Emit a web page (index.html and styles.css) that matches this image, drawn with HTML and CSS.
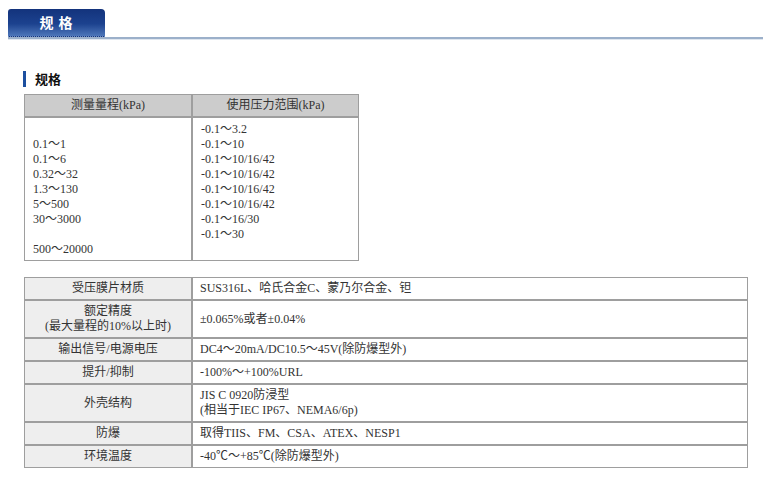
FILE: index.html
```html
<!DOCTYPE html>
<html lang="zh-CN">
<head>
<meta charset="utf-8">
<title>规格</title>
<link rel="stylesheet" href="styles.css">
</head>
<body>
<div class="page">
  <div class="tabbar">
    <div class="tab">规 格</div>
  </div>
  <div class="content">
    <h3 class="sec">规格</h3>
    <table class="spec t1">
      <thead>
        <tr><th class="c1">测量量程(kPa)</th><th>使用压力范围(kPa)</th></tr>
      </thead>
      <tbody>
        <tr>
          <td class="c1"><br>0.1～1<br>0.1～6<br>0.32～32<br>1.3～130<br>5～500<br>30～3000<br><br>500～20000</td>
          <td>-0.1～3.2<br>-0.1～10<br>-0.1～10/16/42<br>-0.1～10/16/42<br>-0.1～10/16/42<br>-0.1～10/16/42<br>-0.1～16/30<br>-0.1～30</td>
        </tr>
      </tbody>
    </table>
    <table class="spec t2">
      <tbody>
        <tr><th class="c1">受压膜片材质</th><td>SUS316L、哈氏合金C、蒙乃尔合金、钽</td></tr>
        <tr class="two"><th class="c1">额定精度<br>(最大量程的10%以上时)</th><td>±0.065%或者±0.04%</td></tr>
        <tr><th class="c1">输出信号/电源电压</th><td>DC4～20mA/DC10.5～45V(除防爆型外)</td></tr>
        <tr><th class="c1">提升/抑制</th><td>-100%～+100%URL</td></tr>
        <tr class="two"><th class="c1">外壳结构</th><td>JIS C 0920防浸型<br>(相当于IEC IP67、NEMA6/6p)</td></tr>
        <tr><th class="c1">防爆</th><td>取得TIIS、FM、CSA、ATEX、NESP1</td></tr>
        <tr><th class="c1">环境温度</th><td>-40℃～+85℃(除防爆型外)</td></tr>
      </tbody>
    </table>
  </div>
</div>
</body>
</html>
```
FILE: styles.css
```css
html, body {
  margin: 0;
  padding: 0;
  background: #fff;
}
body {
  padding: 8px;
  font-family: "Liberation Serif", "Noto Sans CJK SC", serif;
  font-size: 12px;
  color: #333;
}
.page {
  width: 765px;
}
.tabbar {
  width: 755px;
  padding-top: 1px;
  border-bottom: 2px solid #9cb0ca;
  box-shadow: 0 1px 0 #dfe6ef;
  display: flex;
}
.tab {
  width: 97px;
  height: 28px;
  box-sizing: border-box;
  border-radius: 3px 4px 0 0;
  background: linear-gradient(to bottom, #13337c 0%, #1c428f 55%, #4d76b9 100%);
  border-bottom: 1px dotted #6f8fc4;
  color: #fff;
  font-family: "Noto Sans CJK SC", sans-serif;
  font-weight: bold;
  font-size: 14px;
  line-height: 27px;
  text-align: center;
  letter-spacing: 1px;
}
.content {
  padding-left: 16px;
  padding-top: 32px;
}
.sec {
  margin: 0;
  height: 16px;
  border-left: 3px solid #1d4f9f;
  padding-left: 9px;
  font-family: "Noto Sans CJK SC", sans-serif;
  font-size: 13px;
  font-weight: bold;
  color: #111;
  line-height: 16px;
  margin-left: -1px;
}
.spec {
  border-collapse: separate;
  border-spacing: 0;
  table-layout: fixed;
}
.spec th, .spec td {
  border: 1px solid #9e9e9e;
  padding: 3px 7px;
  line-height: 15px;
  font-weight: normal;
  vertical-align: middle;
}
.spec th {
  text-align: center;
}
.spec td {
  text-align: left;
}
.t1 {
  margin-top: 7px;
  width: 335px;
}
.t1 .c1 {
  width: 152px;
}
.t1 thead th {
  background: #cccccc;
  color: #333;
}
.t1 tbody td {
  vertical-align: top;
  padding: 4px 7px 1px 8px;
  height: 137px;
}
.t2 {
  margin-top: 16px;
  width: 724px;
}
.t2 .c1 {
  width: 152px;
  background: #eeeeee;
}
.t2 .two th, .t2 .two td {
  padding-top: 3px;
  padding-bottom: 3px;
}
```
